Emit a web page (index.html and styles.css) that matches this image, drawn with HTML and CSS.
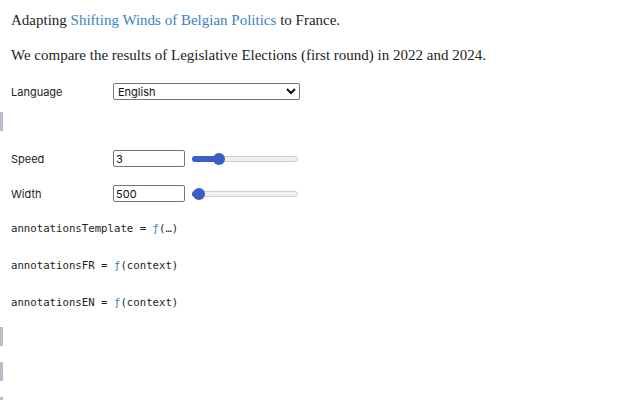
FILE: index.html
```html
<!DOCTYPE html>
<html>
<head>
<meta charset="utf-8">
<link rel="stylesheet" href="styles.css">
</head>
<body>
<div class="nb">
  <div class="cell prose">
    <p>Adapting <a href="#">Shifting Winds of Belgian Politics</a> to France.</p>
  </div>
  <div class="cell prose">
    <p>We compare the results of Legislative Elections (first round) in 2022 and 2024.</p>
  </div>
  <div class="cell form-cell">
    <label class="lbl">Language</label>
    <select class="sel"><option>English</option></select>
  </div>
  <div class="cell empty"><span class="marker"></span></div>
  <div class="cell form-cell">
    <label class="lbl">Speed</label>
    <input class="num" type="text" value="3">
    <span class="range"><span class="fill" style="width:26px"></span><span class="thumb" style="left:26px"></span></span>
  </div>
  <div class="cell form-cell">
    <label class="lbl">Width</label>
    <input class="num" type="text" value="500">
    <span class="range"><span class="fill" style="width:6px"></span><span class="thumb" style="left:6px"></span></span>
  </div>
  <div class="cell code">annotationsTemplate = <span class="f">ƒ</span>(…)</div>
  <div class="cell code">annotationsFR = <span class="f">ƒ</span>(context)</div>
  <div class="cell code">annotationsEN = <span class="f">ƒ</span>(context)</div>
  <div class="cell empty"><span class="marker"></span></div>
  <div class="cell empty"><span class="marker"></span></div>
  <div class="cell empty"><span class="marker"></span></div>
</div>
</body>
</html>
```
FILE: styles.css
```css
html, body { margin: 0; padding: 0; background: #fff; }
body { overflow: hidden; height: 400px; }
.nb { padding-left: 11px; }
.cell { position: relative; }
.prose p {
  margin: 0;
  font-family: "Liberation Serif", serif;
  font-size: 15px;
  color: #1b1e23;
}
.prose:first-child { padding-top: 12px; }
.prose + .prose { margin-top: 18px; }
.prose a { color: #3b82c4; text-decoration: none; }
.form-cell {
  display: flex;
  align-items: center;
  height: 17px;
  font-family: "Inter", sans-serif;
  font-size: 11px;
  color: #1b1e23;
}
.prose + .form-cell { margin-top: 19px; }
.lbl { width: 102px; flex: none; }
.sel {
  width: 187px;
  height: 17px;
  font-family: "Inter", sans-serif;
  font-size: 11px;
  border: 1px solid #767676;
  border-radius: 2px;
  background: #fff;
  padding: 0;
  color: #111;
}
.num {
  width: 72px;
  height: 17px;
  box-sizing: border-box;
  border: 1px solid #767676;
  border-radius: 2px;
  padding: 0 2px;
  font-family: "Inter", sans-serif;
  font-size: 11px;
  color: #111;
  margin: 0;
}
.range {
  position: relative;
  margin-left: 7px;
  width: 106px;
  height: 6px;
  border: 1px solid #cfcfcf;
  border-radius: 4px;
  background: #efefef;
  box-sizing: border-box;
}
.fill {
  position: absolute;
  left: -1px; top: -1px;
  height: 6px;
  background: #3a5ec4;
  border-radius: 4px;
}
.thumb {
  position: absolute;
  top: 50%;
  width: 12px; height: 12px;
  margin: -6px 0 0 -6px;
  border-radius: 50%;
  background: #3a5ec4;
}
.empty { height: 19px; margin-left: -11px; margin-top: 16px; }
.form-cell + .empty { margin-top: 12px; }
.empty .marker { position: absolute; left: 0; top: 0; width: 3px; height: 19px; background: #b9bccb; }
.form-cell + .form-cell { margin-top: 18px; }
.empty + .form-cell { margin-top: 19px; }
.code {
  font-family: "DejaVu Sans Mono", monospace;
  font-size: 10.7px;
  color: #1b1e23;
  height: 17px;
  line-height: 17px;
}
.form-cell + .code { margin-top: 18px; }
.code + .code { margin-top: 20px; }
.code + .empty { margin-top: 16px; }
.empty + .empty { margin-top: 16px; }
.f { color: #3b82c4; }
```
